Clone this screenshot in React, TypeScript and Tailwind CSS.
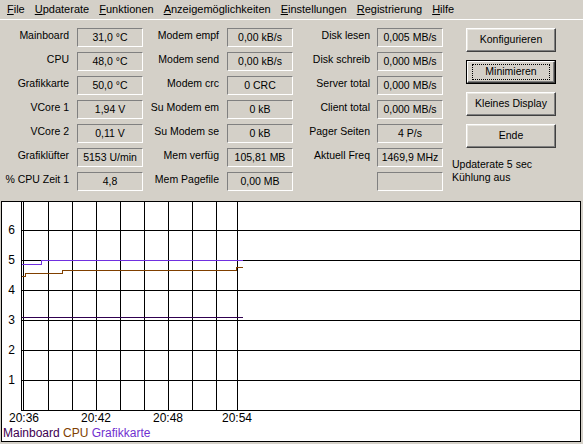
import React from 'react';

const menu = [
  ['F', 'ile'],
  ['U', 'pdaterate'],
  ['F', 'unktionen'],
  ['A', 'nzeigemöglichkeiten'],
  ['E', 'instellungen'],
  ['R', 'egistrierung'],
  ['H', 'ilfe'],
];

const col1 = [
  ['Mainboard', '31,0 °C'],
  ['CPU', '48,0 °C'],
  ['Grafikkarte', '50,0 °C'],
  ['VCore 1', '1,94 V'],
  ['VCore 2', '0,11 V'],
  ['Grafiklüfter', '5153 U/min'],
  ['% CPU Zeit 1', '4,8'],
];

const col2 = [
  ['Modem empf', '0,00 kB/s'],
  ['Modem send', '0,00 kB/s'],
  ['Modem crc', '0 CRC'],
  ['Su Modem em', '0 kB'],
  ['Su Modem se', '0 kB'],
  ['Mem verfüg', '105,81 MB'],
  ['Mem Pagefile', '0,00 MB'],
];

const col3 = [
  ['Disk lesen', '0,005 MB/s'],
  ['Disk schreib', '0,000 MB/s'],
  ['Server total', '0,000 MB/s'],
  ['Client total', '0,000 MB/s'],
  ['Pager Seiten', '4 P/s'],
  ['Aktuell Freq', '1469,9 MHz'],
  ['', ''],
];

// chart geometry in page pixels
const vLines = [21, 23, 48, 72, 96, 120, 144, 168, 192, 216, 237];
const hLines = [230, 260, 290, 320, 350, 380, 410];
const yLabels = [6, 5, 4, 3, 2, 1];
const xLabels: [string, number][] = [
  ['20:36', 24],
  ['20:42', 96],
  ['20:48', 168],
  ['20:54', 237],
];

function Field({ value }: { value: string }) {
  return (
    <div className="flex h-[19px] w-[66px] items-center justify-center border border-t-[#808080] border-l-[#808080] border-b-white border-r-white whitespace-nowrap">
      {value}
    </div>
  );
}

function Column({ rows, labelWidth, pad }: { rows: string[][]; labelWidth: string; pad: string }) {
  return (
    <div className="flex flex-col gap-[5px]">
      {rows.map(([label, value], i) => (
        <div key={i} className="flex h-[19px]">
          <div className={`${labelWidth} ${pad} text-right leading-[13px] pt-[1px] whitespace-nowrap`}>{label}</div>
          <Field value={value} />
        </div>
      ))}
    </div>
  );
}

function Button({ label }: { label: string }) {
  return (
    <div className="flex h-[24px] w-[90px] items-center justify-center border border-t-white border-l-white border-r-[#404040] border-b-[#404040] shadow-[inset_-1px_-1px_0_#808080,inset_1px_1px_0_#e8e6e0]">
      {label}
    </div>
  );
}

export default function App() {
  return (
    <div className="h-[444px] w-[583px] overflow-hidden bg-[#d4d0c8] text-[10.5px] text-black font-['Liberation_Sans',Arial,sans-serif]">
      {/* menu bar */}
      <div className="flex h-[20px] items-center border-b border-white pl-[2px] pb-[1px] text-[11px]">
        {menu.map(([key, rest], i) => (
          <span key={i} className="px-[5px]">
            <span className="underline underline-offset-[1px]">{key}</span>
            {rest}
          </span>
        ))}
      </div>

      {/* values panel */}
      <div className="flex h-[181px] pt-[8px]">
        <Column rows={col1} labelWidth="w-[77px]" pad="pr-[8px]" />
        <Column rows={col2} labelWidth="w-[84px]" pad="pr-[8px]" />
        <Column rows={col3} labelWidth="w-[84px]" pad="pr-[7px]" />
        <div className="ml-[23px] flex flex-col gap-[8px]">
          <Button label="Konfigurieren" />
          <div className="flex h-[24px] w-[90px] border border-black">
            <div className="flex flex-1 items-center justify-center border border-t-white border-l-white border-r-[#404040] border-b-[#404040] shadow-[inset_-1px_-1px_0_#808080]">
              <span className="flex h-[16px] w-[78px] items-center justify-center border border-dotted border-black">
                Minimieren
              </span>
            </div>
          </div>
          <Button label="Kleines Display" />
          <Button label="Ende" />
          <div className="-ml-[14px] mt-[2px] leading-[13px]">
            <div>Updaterate 5 sec</div>
            <div>Kühlung aus</div>
          </div>
        </div>
      </div>

      {/* chart */}
      <div className="pl-[1px] pr-[2px]">
        <div className="h-[241px] border border-black bg-white">
          <svg width="578" height="224" viewBox="2 202 578 224" shapeRendering="crispEdges" className="block">
            {hLines.map((y) => (
              <line key={y} x1={21} y1={y + 0.5} x2={580} y2={y + 0.5} stroke="#000" strokeWidth={1} />
            ))}
            {vLines.map((x) => (
              <line key={x} x1={x + 0.5} y1={202} x2={x + 0.5} y2={410} stroke="#000" strokeWidth={1} />
            ))}
            <polyline points="22,317.5 243,317.5" fill="none" stroke="#300050" strokeWidth={1} />
            <polyline
              points="22,276.5 25.5,276.5 25.5,273.5 62.5,273.5 62.5,270.5 236.5,270.5 236.5,267.5 243,267.5"
              fill="none"
              stroke="#804000"
              strokeWidth={1}
            />
            <polyline points="22,264.5 41.5,264.5 41.5,260.5 243,260.5" fill="none" stroke="#7030e0" strokeWidth={1} />
            {yLabels.map((v) => (
              <text
                key={v}
                x={11.5}
                y={410 - v * 30 + 4}
                textAnchor="middle"
                fontSize={12}
                fontFamily="'Liberation Sans', Arial, sans-serif"
                fill="#000"
              >
                {v}
              </text>
            ))}
            {xLabels.map(([t, x]) => (
              <text
                key={t}
                x={x}
                y={422}
                textAnchor="middle"
                fontSize={12}
                fontFamily="'Liberation Sans', Arial, sans-serif"
                fill="#000"
              >
                {t}
              </text>
            ))}
          </svg>
          <div className="h-[15px] pl-[1px] text-[12px] leading-[15px] whitespace-nowrap">
            <span className="text-[#400050]">Mainboard</span>{' '}
            <span className="text-[#804000]">CPU</span>{' '}
            <span className="text-[#7030d0]">Grafikkarte</span>
          </div>
        </div>
      </div>
    </div>
  );
}
